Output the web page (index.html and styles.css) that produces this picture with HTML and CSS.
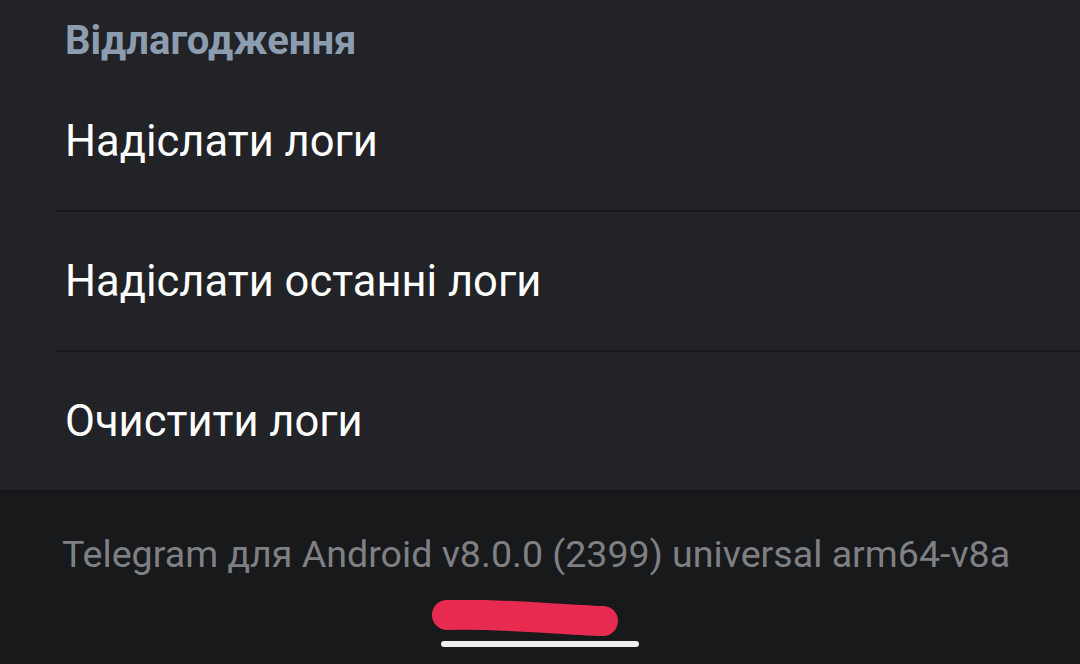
FILE: index.html
```html
<!DOCTYPE html>
<html lang="uk">

<head>
  <meta charset="UTF-8" />
  <meta name="viewport" content="width=device-width, initial-scale=1.0" />
  <title>Відлагодження</title>
  <link rel="stylesheet" href="styles.css">
</head>

<body>

  <section class="debug">
    <h2 class="section-title">Відлагодження</h2>
    <div class="item">Надіслати логи</div>
    <div class="item">Надіслати останні логи</div>
    <div class="item last">Очистити логи</div>
  </section>

  <footer class="footer">
    <p class="version">Telegram для Android v8.0.0 (2399) universal arm64-v8a</p>

    <!-- закреслення -->
    <svg class="scribble" width="200" height="36" viewBox="0 0 200 36">
      <path d="M15 15 C60 13 120 19 171 21" stroke="#e62a50" stroke-width="30" stroke-linecap="round" fill="none" />
    </svg>

    <div class="home-bar"></div>
  </footer>

</body>

</html>
```

FILE: styles.css
```css
body {
  margin: 0;
  padding: 0;
  background-color: #222327;
  font-family: Roboto, "Noto Sans", sans-serif;
  overflow: hidden;
}

.debug {
  background-color: #222327;
}

.section-title {
  margin: 0;
  height: 72px;
  padding: 8px 0 0 65px;
  box-sizing: border-box;
  display: flex;
  align-items: center;
  font-size: 40px;
  font-weight: bold;
  color: #8d9db0;
}

.item {
  height: 140px;
  margin-left: 55px;
  padding-left: 10px;
  box-sizing: border-box;
  display: flex;
  align-items: center;
  font-size: 43.5px;
  color: #ffffff;
  border-bottom: 2px solid #17181b;
}

.item.last {
  height: 138px;
  border-bottom: none;
}

.footer {
  background-color: #18191b;
  height: 174px;
  box-sizing: border-box;
  padding-top: 42px;
  display: flex;
  flex-direction: column;
  box-shadow: inset 0 4px 3px -2px #141517;
}

.version {
  margin: 0 0 0 62px;
  font-size: 37.6px;
  line-height: 45px;
  color: #7f8084;
}

.scribble {
  display: block;
  margin: 23px 0 0 432px;
}

.home-bar {
  width: 198px;
  height: 6px;
  border-radius: 3px;
  background-color: #eeeeee;
  margin: 5px 0 0 441px;
}
```
